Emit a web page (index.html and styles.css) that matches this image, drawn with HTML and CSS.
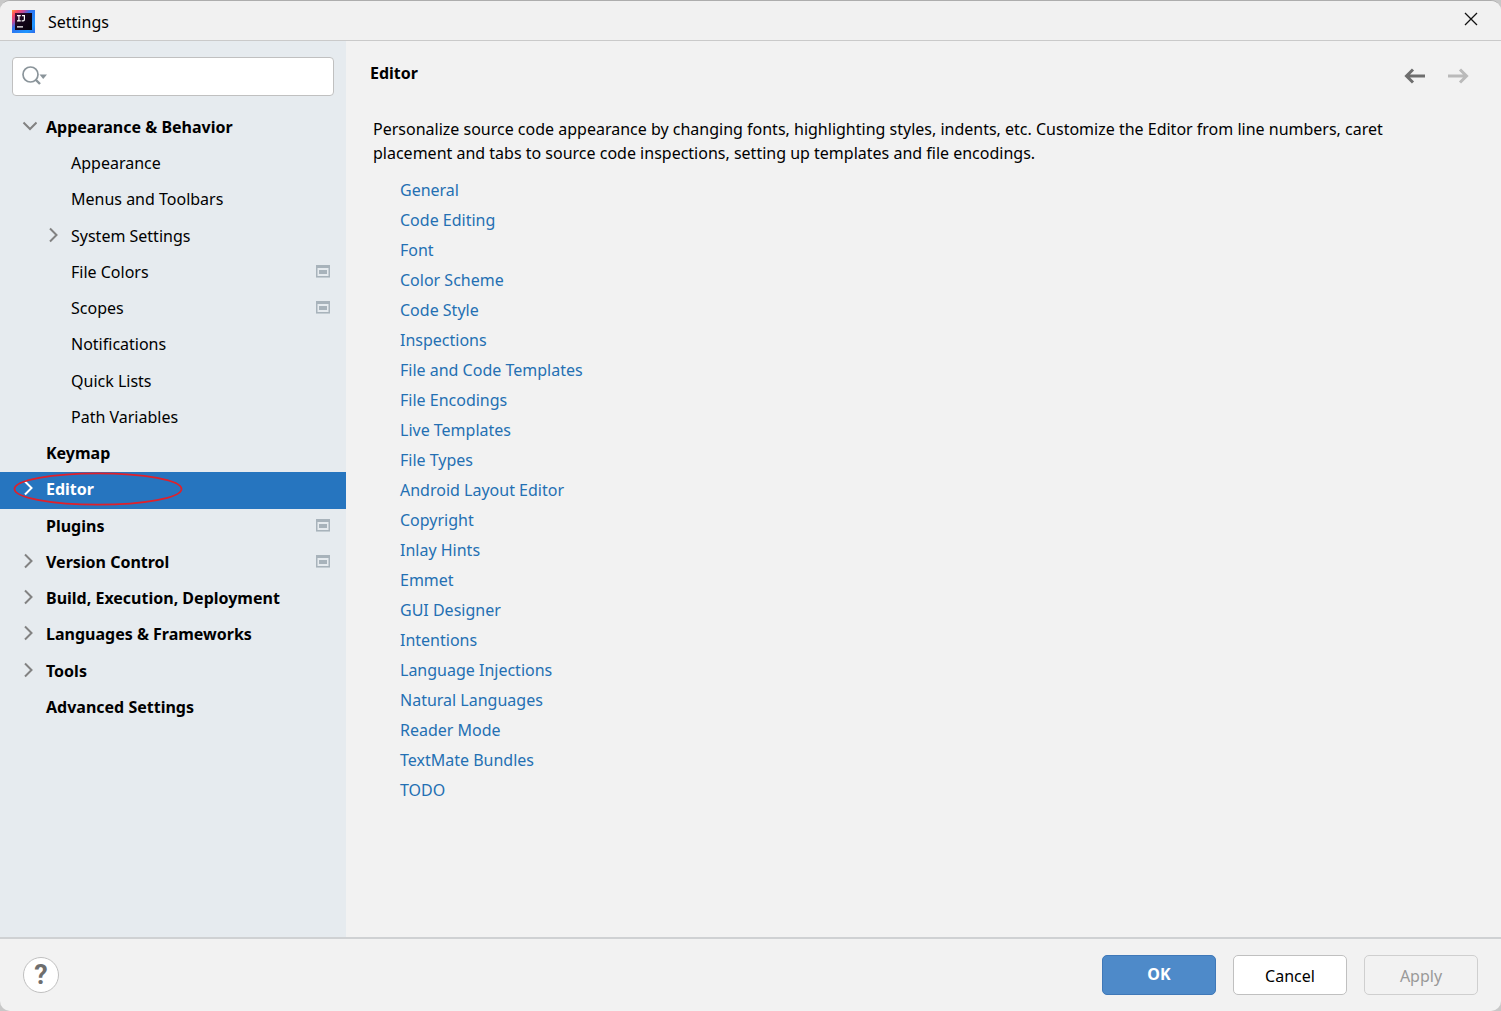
FILE: index.html
```html
<!DOCTYPE html>
<html lang="en">
<head>
<meta charset="utf-8">
<title>Settings</title>
<meta name="viewport" content="width=device-width, initial-scale=1">
<link rel="stylesheet" href="styles.css">
</head>
<body>
<svg class="defs" aria-hidden="true">
  <symbol id="right" viewBox="0 0 16 16"><path d="M4 1.500L10.500 8L4 14.500" fill="none" stroke="currentColor" stroke-width="2"/></symbol>
  <symbol id="down" viewBox="0 0 16 16"><path d="M2.500 4.500L9 11L15.500 4.500" fill="none" stroke="currentColor" stroke-width="2"/></symbol>
  <symbol id="project" viewBox="0 0 14 13"><path d="M0 0h14v12H0zM1.500 3v8h11V3z" fill="#a8b3bb" fill-rule="evenodd"/><path d="M0 12h14v1H0z" fill="#c3ccd2"/><path d="M3 5h8v4H3z" fill="#a8b3bb"/></symbol>
</svg>
<div class="window">
  <header class="titlebar">
    <svg class="logo" viewBox="0 0 24 24" aria-hidden="true">
      <defs>
        <linearGradient id="edge" x1="0" y1="0" x2="1" y2="1">
          <stop offset="0" stop-color="#ff9a3c"/><stop offset=".14" stop-color="#fb4a62"/><stop offset=".28" stop-color="#c24a9c"/><stop offset=".42" stop-color="#2f72ee"/><stop offset=".8" stop-color="#1e96ff"/><stop offset="1" stop-color="#2d67e8"/>
        </linearGradient>
        <linearGradient id="core" x1="0" y1="0" x2="1" y2="1">
          <stop offset="0" stop-color="#4a1038"/><stop offset=".4" stop-color="#16051c"/><stop offset="1" stop-color="#050108"/>
        </linearGradient>
      </defs>
      <path d="M0 0h23v23H0z" fill="url(#edge)"/>
      <path d="M3 3h17v17H3z" fill="url(#core)"/>
      <path d="M5 5.700h3.800M6.900 5.700v5M5 10.800h3.800M10 5.700h2.400v3.800q0 1.300-1.300 1.300h-1.500M5 16.800h6" fill="none" stroke="#fff" stroke-width="1.200"/>
    </svg>
    <h1 class="title">Settings</h1>
    <button class="icon-button close" type="button" aria-label="Close">
      <svg viewBox="0 0 14 14" width="14" height="14"><path d="M1 1L13 13M13 1L1 13" stroke="#111" stroke-width="1.300"/></svg>
    </button>
  </header>
  <div class="body">
    <aside class="sidebar">
      <label class="search">
        <svg viewBox="0 0 26 20" width="26" height="20" aria-hidden="true"><circle cx="8.500" cy="8.500" r="7.500" fill="none" stroke="#8a949a" stroke-width="1.700"/><path d="M13.500 13.500L18 18" stroke="#8a949a" stroke-width="2.400"/><path d="M17.500 8.500h7.500L21.200 13z" fill="#8a949a"/></svg>
        <input class="search-input" type="text" aria-label="Search settings">
      </label>
      <ul class="tree">
        <li class="row top"><svg class="chevron"><use href="#down"/></svg><span class="name">Appearance &amp; Behavior</span></li>
        <li class="row sub"><span class="name">Appearance</span></li>
        <li class="row sub"><span class="name">Menus and Toolbars</span></li>
        <li class="row sub"><svg class="chevron"><use href="#right"/></svg><span class="name">System Settings</span></li>
        <li class="row sub"><span class="name">File Colors</span><svg class="project"><use href="#project"/></svg></li>
        <li class="row sub"><span class="name">Scopes</span><svg class="project"><use href="#project"/></svg></li>
        <li class="row sub"><span class="name">Notifications</span></li>
        <li class="row sub"><span class="name">Quick Lists</span></li>
        <li class="row sub"><span class="name">Path Variables</span></li>
        <li class="row top"><span class="name">Keymap</span></li>
        <li class="row top selected"><svg class="chevron"><use href="#right"/></svg><span class="name">Editor</span>
          <svg class="marker" viewBox="0 0 170 34" aria-hidden="true"><ellipse cx="85" cy="17" rx="83.500" ry="15.700" fill="none" stroke="#e0202a" stroke-width="1.800"/></svg></li>
        <li class="row top"><span class="name">Plugins</span><svg class="project"><use href="#project"/></svg></li>
        <li class="row top"><svg class="chevron"><use href="#right"/></svg><span class="name">Version Control</span><svg class="project"><use href="#project"/></svg></li>
        <li class="row top"><svg class="chevron"><use href="#right"/></svg><span class="name">Build, Execution, Deployment</span></li>
        <li class="row top"><svg class="chevron"><use href="#right"/></svg><span class="name">Languages &amp; Frameworks</span></li>
        <li class="row top"><svg class="chevron"><use href="#right"/></svg><span class="name">Tools</span></li>
        <li class="row top"><span class="name">Advanced Settings</span></li>
      </ul>
    </aside>
    <main class="content">
      <div class="heading">
        <h2 class="page-title">Editor</h2>
        <div class="history">
          <button class="icon-button" type="button" aria-label="Back"><svg viewBox="0 0 22 16" width="22" height="16"><path d="M21 8H3M9 1.500L2.500 8L9 14.500" fill="none" stroke="#6e6e6e" stroke-width="3"/></svg></button>
          <button class="icon-button" type="button" aria-label="Forward" disabled><svg viewBox="0 0 22 16" width="22" height="16"><path d="M1 8H19M13 1.500L19.500 8L13 14.500" fill="none" stroke="#bababa" stroke-width="3"/></svg></button>
        </div>
      </div>
      <p class="intro">Personalize source code appearance by changing fonts, highlighting styles, indents, etc. Customize the Editor from line numbers, caret placement and tabs to source code inspections, setting up templates and file encodings.</p>
      <ul class="links">
        <li><a href="#">General</a></li>
        <li><a href="#">Code Editing</a></li>
        <li><a href="#">Font</a></li>
        <li><a href="#">Color Scheme</a></li>
        <li><a href="#">Code Style</a></li>
        <li><a href="#">Inspections</a></li>
        <li><a href="#">File and Code Templates</a></li>
        <li><a href="#">File Encodings</a></li>
        <li><a href="#">Live Templates</a></li>
        <li><a href="#">File Types</a></li>
        <li><a href="#">Android Layout Editor</a></li>
        <li><a href="#">Copyright</a></li>
        <li><a href="#">Inlay Hints</a></li>
        <li><a href="#">Emmet</a></li>
        <li><a href="#">GUI Designer</a></li>
        <li><a href="#">Intentions</a></li>
        <li><a href="#">Language Injections</a></li>
        <li><a href="#">Natural Languages</a></li>
        <li><a href="#">Reader Mode</a></li>
        <li><a href="#">TextMate Bundles</a></li>
        <li><a href="#">TODO</a></li>
      </ul>
    </main>
  </div>
  <footer class="footer">
    <button class="help" type="button" aria-label="Help">?</button>
    <div class="actions">
      <button class="button primary" type="button">OK</button>
      <button class="button" type="button">Cancel</button>
      <button class="button" type="button" disabled>Apply</button>
    </div>
  </footer>
</div>
</body>
</html>
```
FILE: styles.css
```css
* { box-sizing: border-box; }
body {
  margin: 0;
  background: #c8c8c8;
  color: #000;
  font: 16px/24px "Noto Sans", "Open Sans", sans-serif;
}
button, input { font: inherit; }
ul { margin: 0; padding: 0; list-style: none; }
.defs { display: none; }
.window {
  display: flex;
  flex-direction: column;
  min-height: 100vh;
  overflow: hidden;
  border-top: 1px solid #adadad;
  border-radius: 10px;
  background: #f2f2f2;
}
.titlebar {
  display: flex;
  align-items: center;
  height: 40px;
  padding: 2px 20px 0 12px;
  border-bottom: 1px solid #cacaca;
  background: #f1f1f1;
}
.logo { width: 24px; height: 24px; }
.title { flex: 1; margin: 0 0 0 12px; font-size: 16px; font-weight: 400; }
.icon-button { display: flex; padding: 4px; border: 0; background: none; }
.close { margin-bottom: 6px; padding: 3px; }
.body { display: flex; flex: 1; }
.sidebar { flex: 0 0 346px; background: #e6ebef; }
.search {
  display: flex;
  align-items: center;
  height: 39px;
  margin: 16px 12px 14px;
  padding: 0 9px 1px;
  border: 1px solid #c0c0c0;
  border-radius: 4px;
  background: #fff;
}
.search-input { flex: 1; min-width: 0; border: 0; outline: 0; background: none; }
.row {
  position: relative;
  display: flex;
  align-items: flex-start;
  height: 36px;
  padding: 5px 16px 0 46px;
}
.row:nth-child(4n + 3) { height: 37px; }
.sub { padding-left: 71px; }
.top { font-weight: 700; }
.name { flex: 1; }
.chevron { width: 16px; height: 16px; margin: 3px 9px 0 -25px; color: #828282; }
.project { width: 14px; height: 13px; margin-top: 5px; }
.selected { background: #2675bf; color: #fff; }
.selected .chevron { color: #fff; }
.marker { position: absolute; left: 13px; top: 0; width: 170px; height: 34px; }
.content { flex: 1; min-width: 0; padding: 20px 28px 20px 24px; }
.heading { display: flex; justify-content: space-between; align-items: flex-start; }
.page-title { margin: 0; font-size: 16px; }
.history { display: flex; gap: 13px; padding-top: 3px; }
.intro { max-width: 1050px; margin: 29px 0 10px 3px; }
.links { padding-left: 30px; line-height: 30px; }
.links a { color: #2470b3; text-decoration: none; }
.footer {
  display: flex;
  align-items: center;
  justify-content: space-between;
  height: 74px;
  padding: 0 23px;
  border-top: 2px solid #cfd1d3;
}
.help {
  width: 36px;
  height: 36px;
  padding: 0;
  border: 1px solid #c0c0c0;
  border-radius: 50%;
  background: #fff;
  color: #6e6e6e;
  font: 700 27px/32px Roboto, sans-serif;
}
.actions { display: flex; gap: 17px; }
.button {
  width: 114px;
  height: 40px;
  padding: 2px 0 0;
  border: 1px solid #c0c0c0;
  border-radius: 5px;
  background: #fff;
  color: #000;
}
.button:disabled { border-color: #cfcfcf; background: none; color: #999; }
.primary { padding: 0 0 2px; border-color: #3f78b8; background: #4e8ac9; color: #fff; font-weight: 700; }
```
